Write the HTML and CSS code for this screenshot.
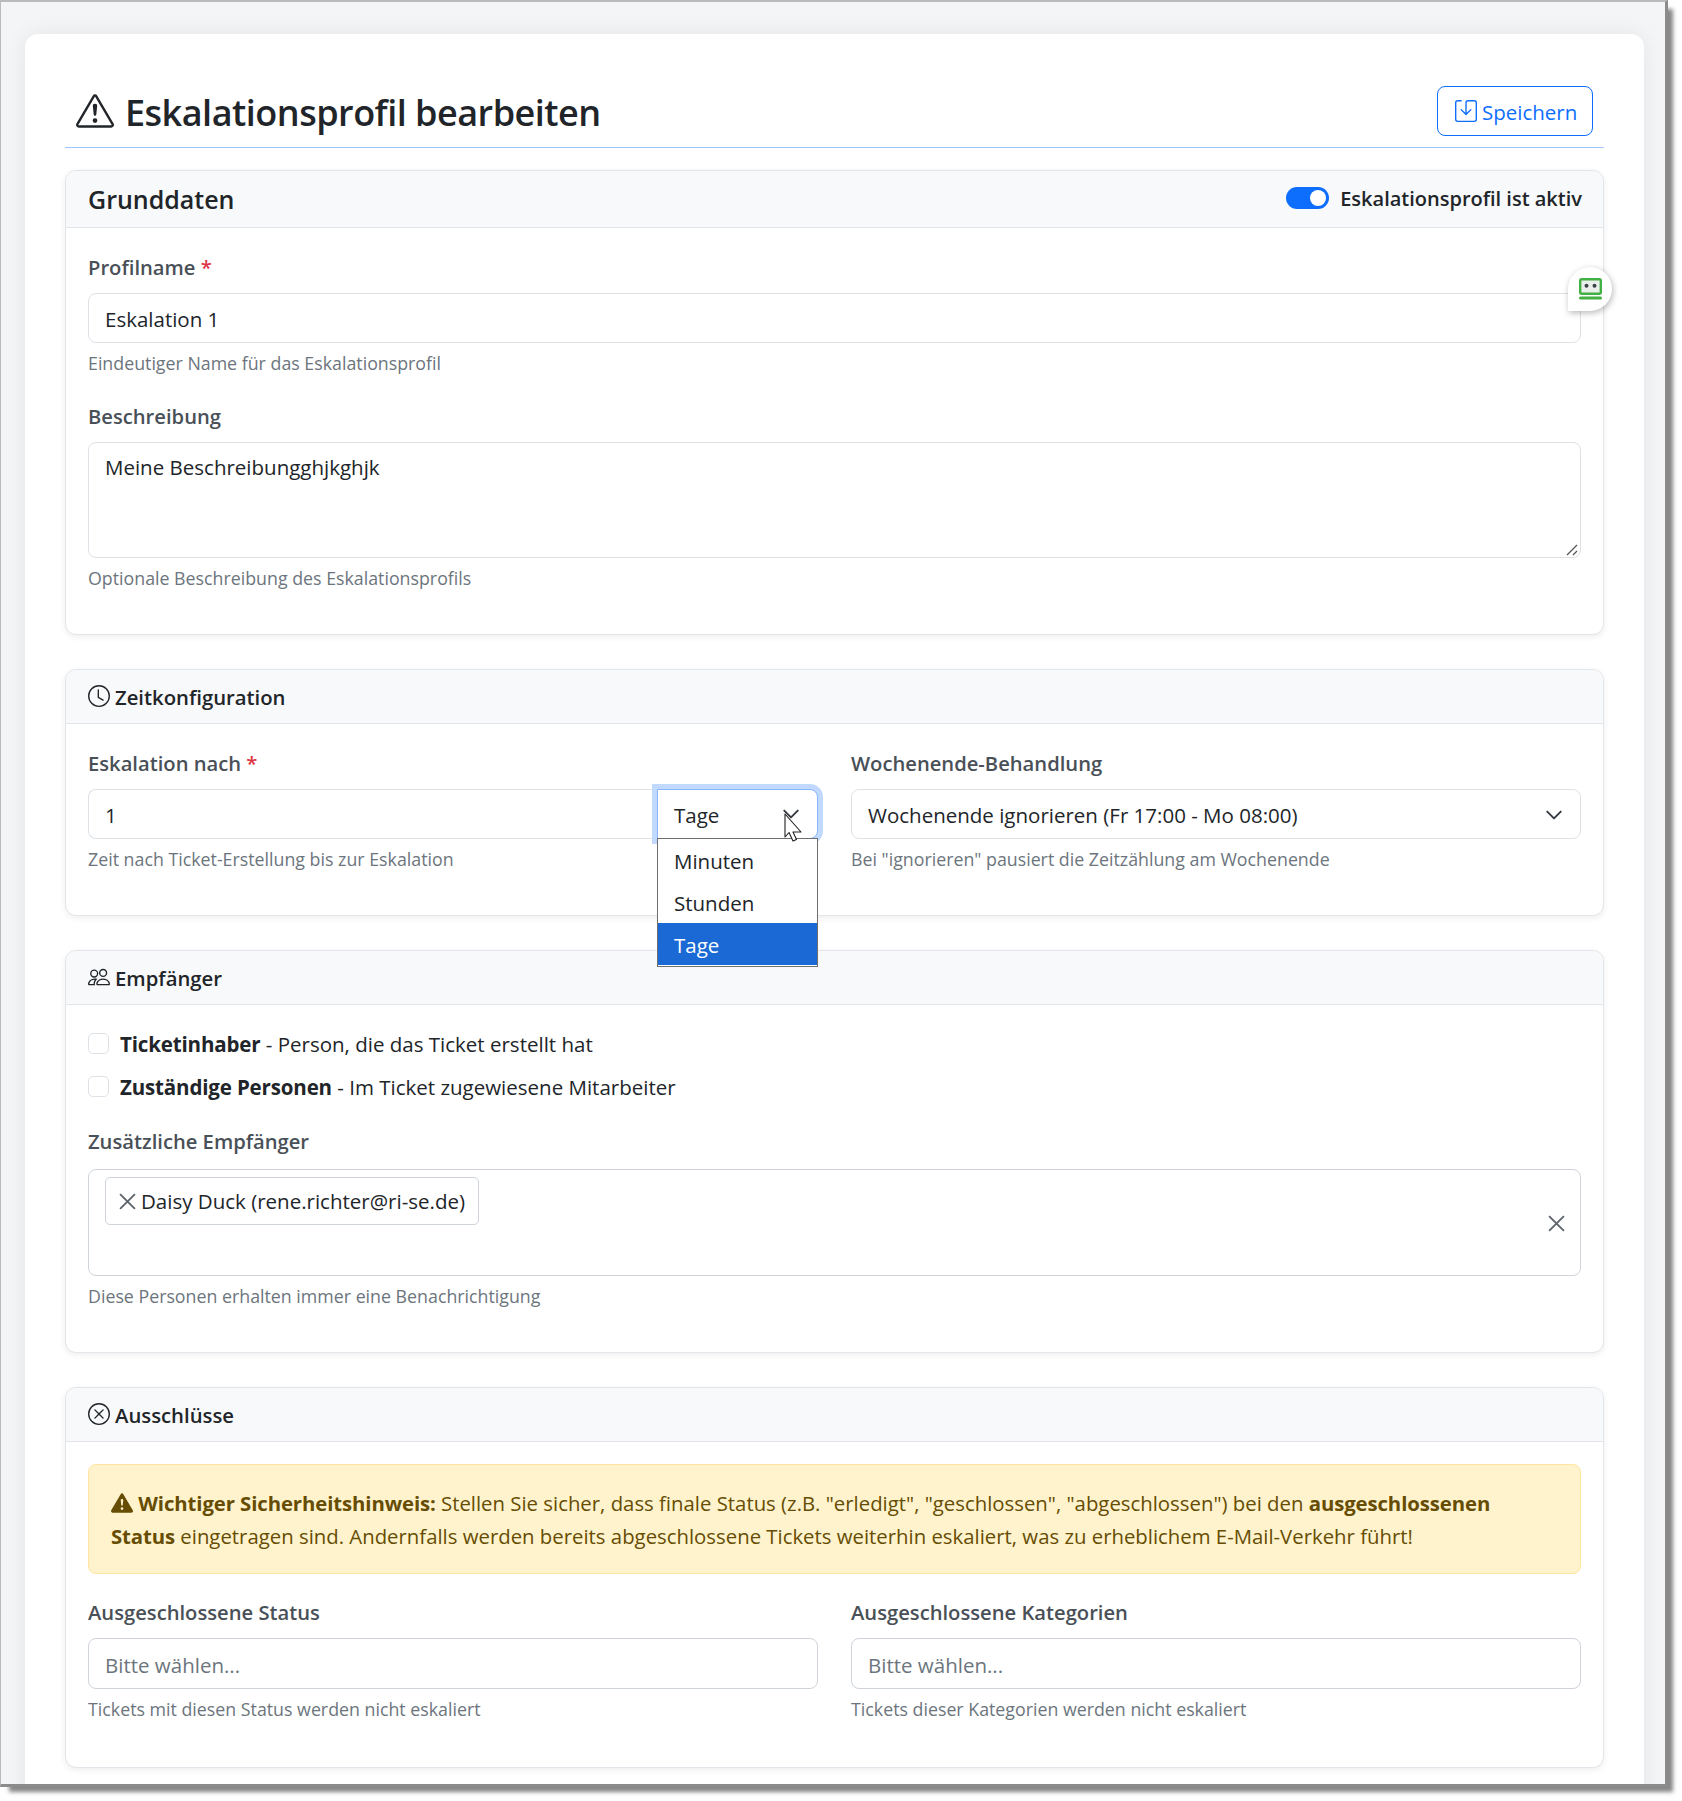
FILE: index.html
```html
<!DOCTYPE html>
<html lang="de">
<head>
<meta charset="utf-8">
<title>Eskalationsprofil bearbeiten</title>
<link rel="stylesheet" href="styles.css">
</head>
<body>
<div class="window">
  <main class="page-card">
    <header class="title-row">
      <h1 class="title">
        <svg class="title-icon" viewBox="0 0 16 16" fill="currentColor"><path d="M7.938 2.016A.13.13 0 0 1 8.002 2a.13.13 0 0 1 .063.016.146.146 0 0 1 .054.057l6.857 11.667c.036.06.035.124.002.183a.163.163 0 0 1-.054.06.116.116 0 0 1-.066.017H1.146a.115.115 0 0 1-.066-.017.163.163 0 0 1-.054-.06.176.176 0 0 1 .002-.183L7.884 2.073a.147.147 0 0 1 .054-.057zm1.044-.45a1.13 1.13 0 0 0-1.96 0L.165 13.233c-.457.778.091 1.767.98 1.767h13.713c.889 0 1.438-.99.98-1.767L8.982 1.566z"/><path d="M7.002 12a1 1 0 1 1 2 0 1 1 0 0 1-2 0zM7.1 5.995a.905.905 0 1 1 1.8 0l-.35 3.507a.552.552 0 0 1-1.1 0L7.1 5.995z"/></svg>
        <span class="title-text">Eskalationsprofil bearbeiten</span>
      </h1>
      <button class="save-btn" type="button">
        <svg class="save-icon" viewBox="0 0 16 16" fill="currentColor"><path d="M2 1a1 1 0 0 0-1 1v12a1 1 0 0 0 1 1h12a1 1 0 0 0 1-1V2a1 1 0 0 0-1-1H9.5a1 1 0 0 0-1 1v7.293l2.646-2.647a.5.5 0 0 1 .708.708l-3.5 3.5a.5.5 0 0 1-.708 0l-3.5-3.5a.5.5 0 1 1 .708-.708L7.5 9.293V2a2 2 0 0 1 2-2H14a2 2 0 0 1 2 2v12a2 2 0 0 1-2 2H2a2 2 0 0 1-2-2V2a2 2 0 0 1 2-2h2.5a.5.5 0 0 1 0 1H2z"/></svg>
        <span class="save-text">Speichern</span>
      </button>
    </header>

    <section class="panel">
      <div class="panel-head panel-head-main">
        <h2 class="head-main">Grunddaten</h2>
        <div class="toggle-wrap">
          <span class="toggle"><span class="knob"></span></span>
          <span class="toggle-label">Eskalationsprofil ist aktiv</span>
        </div>
      </div>
      <div class="panel-body">
        <div class="field field-name">
          <label class="lbl">Profilname <span class="req">*</span></label>
          <input class="ctl" type="text" value="Eskalation 1">
          <div class="hint">Eindeutiger Name für das Eskalationsprofil</div>
          <div class="robot">
            <svg viewBox="0 0 23 22" width="23" height="22"><rect x="1.2" y="1.2" width="20.600" height="14.600" rx="1.500" fill="#e9efe9" stroke="#43b043" stroke-width="2.400"/><circle cx="7.500" cy="7.800" r="2" fill="#3c4248"/><circle cx="15.500" cy="7.800" r="2" fill="#3c4248"/><rect x="0" y="18.500" width="23" height="3" rx="1.500" fill="#43b043"/></svg>
          </div>
        </div>
        <div class="field">
          <label class="lbl">Beschreibung</label>
          <div class="area-wrap">
            <textarea class="ctl area">Meine Beschreibungghjkghjk</textarea>
            <svg class="grip" viewBox="0 0 12 12" width="12" height="12"><path d="M1 11L11 1M7 11l4-4" stroke="#555" stroke-width="1.300" fill="none"/></svg>
          </div>
          <div class="hint">Optionale Beschreibung des Eskalationsprofils</div>
        </div>
      </div>
    </section>

    <section class="panel">
      <div class="panel-head">
        <svg class="head-icon" viewBox="0 0 16 16" fill="currentColor"><path d="M8 3.5a.5.5 0 0 0-1 0V9a.5.5 0 0 0 .252.434l3.5 2a.5.5 0 0 0 .496-.868L8 8.71V3.5z"/><path d="M8 16A8 8 0 1 0 8 0a8 8 0 0 0 0 16zm7-8A7 7 0 1 1 1 8a7 7 0 0 1 14 0z"/></svg>
        <h2 class="head-sub">Zeitkonfiguration</h2>
      </div>
      <div class="panel-body two-col">
        <div class="field">
          <label class="lbl">Eskalation nach <span class="req">*</span></label>
          <div class="input-group">
            <input class="ctl ctl-num" type="text" value="1">
            <div class="unit-select">
              <span class="unit-text">Tage</span>
              <svg class="chev" viewBox="0 0 16 16"><path d="M2 5l6 6 6-6" fill="none" stroke="#343a40" stroke-width="1.7" stroke-linecap="round" stroke-linejoin="round"/></svg>
              <ul class="options">
                <li>Minuten</li>
                <li>Stunden</li>
                <li class="selected">Tage</li>
              </ul>
              <svg class="cursor" viewBox="0 0 18 29" width="18" height="29"><path d="M1 1V24L5 19.500L9 28L12.500 26.500L9 19H17Z" fill="#fff" stroke="#222" stroke-width="1.100" stroke-linejoin="round"/></svg>
            </div>
          </div>
          <div class="hint">Zeit nach Ticket-Erstellung bis zur Eskalation</div>
        </div>
        <div class="field">
          <label class="lbl">Wochenende-Behandlung</label>
          <div class="ctl fake-select">
            <span>Wochenende ignorieren (Fr 17:00 - Mo 08:00)</span>
            <svg class="chev" viewBox="0 0 16 16"><path d="M2 5l6 6 6-6" fill="none" stroke="#343a40" stroke-width="1.7" stroke-linecap="round" stroke-linejoin="round"/></svg>
          </div>
          <div class="hint">Bei "ignorieren" pausiert die Zeitzählung am Wochenende</div>
        </div>
      </div>
    </section>

    <section class="panel">
      <div class="panel-head">
        <svg class="head-icon" viewBox="0 0 16 16" fill="currentColor"><path d="M15 14s1 0 1-1-1-4-5-4-5 3-5 4 1 1 1 1h8Zm-7.978-1A.261.261 0 0 1 7 12.996c.001-.264.167-1.030.760-1.720C8.312 10.629 9.282 10 11 10c1.717 0 2.687.630 3.240 1.276.593.690.758 1.457.760 1.720l-.008.002a.274.274 0 0 1-.014.002H7.022ZM11 7a2 2 0 1 0 0-4 2 2 0 0 0 0 4Zm3-2a3 3 0 1 1-6 0 3 3 0 0 1 6 0ZM6.936 9.280a5.880 5.880 0 0 0-1.230-.247A7.350 7.350 0 0 0 5 9c-4 0-5 3-5 4 0 .667.333 1 1 1h4.216A2.238 2.238 0 0 1 5 13c0-1.010.377-2.042 1.090-2.904.243-.294.526-.569.846-.816ZM4.920 10A5.493 5.493 0 0 0 4 13H1c0-.260.164-1.030.760-1.724.545-.636 1.492-1.256 3.160-1.275ZM1.500 5.500a3 3 0 1 1 6 0 3 3 0 0 1-6 0Zm3-2a2 2 0 1 0 0 4 2 2 0 0 0 0-4Z"/></svg>
        <h2 class="head-sub">Empfänger</h2>
      </div>
      <div class="panel-body">
        <div class="check-row"><span class="check"></span><span><b>Ticketinhaber</b> - Person, die das Ticket erstellt hat</span></div>
        <div class="check-row"><span class="check"></span><span><b>Zuständige Personen</b> - Im Ticket zugewiesene Mitarbeiter</span></div>
        <div class="field field-extra">
          <label class="lbl">Zusätzliche Empfänger</label>
          <div class="multi">
            <span class="chip">
              <svg class="chip-x" viewBox="0 0 16 16"><path d="M1 1l14 14M15 1L1 15" stroke="#5c636a" stroke-width="1.700" fill="none"/></svg>
              <span>Daisy Duck (rene.richter@ri-se.de)</span>
            </span>
            <svg class="clear-x" viewBox="0 0 16 16"><path d="M1 1l14 14M15 1L1 15" stroke="#5c636a" stroke-width="1.700" fill="none"/></svg>
          </div>
          <div class="hint">Diese Personen erhalten immer eine Benachrichtigung</div>
        </div>
      </div>
    </section>

    <section class="panel">
      <div class="panel-head">
        <svg class="head-icon" viewBox="0 0 16 16" fill="currentColor"><path d="M8 15A7 7 0 1 1 8 1a7 7 0 0 1 0 14zm0 1A8 8 0 1 0 8 0a8 8 0 0 0 0 16z"/><path d="M4.646 4.646a.5.5 0 0 1 .708 0L8 7.293l2.646-2.647a.5.5 0 0 1 .708.708L8.707 8l2.647 2.646a.5.5 0 0 1-.708.708L8 8.707l-2.646 2.647a.5.5 0 0 1-.708-.708L7.293 8 4.646 5.354a.5.5 0 0 1 0-.708z"/></svg>
        <h2 class="head-sub">Ausschlüsse</h2>
      </div>
      <div class="panel-body body-alert">
        <div class="alert">
          <svg class="alert-icon" viewBox="0 0 16 16" fill="currentColor"><path d="M8.982 1.566a1.130 1.130 0 0 0-1.960 0L.165 13.233c-.457.778.091 1.767.980 1.767h13.713c.889 0 1.438-.990.980-1.767L8.982 1.566zM8 5c.535 0 .954.462.900.995l-.350 3.507a.552.552 0 0 1-1.100 0L7.100 5.995A.905.905 0 0 1 8 5zm.002 6a1 1 0 1 1 0 2 1 1 0 0 1 0-2z"/></svg>
          <b>Wichtiger Sicherheitshinweis:</b> Stellen Sie sicher, dass finale Status (z.B. "erledigt", "geschlossen", "abgeschlossen") bei den <b>ausgeschlossenen Status</b> eingetragen sind. Andernfalls werden bereits abgeschlossene Tickets weiterhin eskaliert, was zu erheblichem E-Mail-Verkehr führt!
        </div>
        <div class="two-col">
          <div class="field">
            <label class="lbl">Ausgeschlossene Status</label>
            <input class="ctl ctl-tall" type="text" placeholder="Bitte wählen...">
            <div class="hint">Tickets mit diesen Status werden nicht eskaliert</div>
          </div>
          <div class="field">
            <label class="lbl">Ausgeschlossene Kategorien</label>
            <input class="ctl ctl-tall" type="text" placeholder="Bitte wählen...">
            <div class="hint">Tickets dieser Kategorien werden nicht eskaliert</div>
          </div>
        </div>
      </div>
    </section>
  </main>
</div>
</body>
</html>
```
FILE: styles.css
```css
* { box-sizing: border-box; }
html, body { margin: 0; padding: 0; background: #fff; }
body {
  font-family: "Open Sans", "Noto Sans", sans-serif;
  font-size: 20.5px;
  color: #212529;
  height: 1801px;
  overflow: hidden;
}
.window {
  width: 1668px;
  height: 1787px;
  background: #f4f5f7;
  border-style: solid;
  border-color: #b9babc #8b8b8b #8b8b8b #b9babc;
  border-width: 2px 3px 3px 1px;
  box-shadow: 7px 7px 4px -2px rgba(70, 70, 70, .65);
  padding: 32px 21px 0 24px;
  overflow: hidden;
}
.page-card {
  background: #fff;
  width: 1619px;
  height: 1800px;
  border-radius: 13px 13px 0 0;
  box-shadow: 0 0 22px rgba(0, 0, 0, .07);
  padding: 52px 40px 0;
}
.title-row {
  display: flex;
  justify-content: space-between;
  align-items: center;
  height: 62px;
  padding: 0 11px 11px;
  border-bottom: 1px solid #9ec5fe;
  margin-bottom: 22px;
}
.title {
  display: flex;
  align-items: center;
  gap: 11px;
  margin: 0;
  font-size: 36px;
  font-weight: 600;
  letter-spacing: -.5px;
  line-height: 50px;
}
.title-text { padding-top: 4px; }
.title-icon { width: 38px; height: 38px; }
.save-btn {
  display: flex;
  align-items: center;
  gap: 5px;
  width: 156px;
  height: 50px;
  padding: 0 0 0 17px;
  background: #fff;
  border: 1px solid #0d6efd;
  border-radius: 8px;
  color: #0d6efd;
  font: inherit;
}
.save-text { padding-top: 2px; }
.save-icon { width: 22px; height: 22px; }

.panel {
  width: 1539px;
  background: #fff;
  border: 1px solid #e2e5e9;
  border-radius: 11px;
  box-shadow: 0 2px 6px rgba(0, 0, 0, .07);
  margin-bottom: 34px;
}
.panel-head {
  display: flex;
  align-items: center;
  gap: 5px;
  height: 54px;
  padding: 0 22px;
  background: #f8f9fa;
  border-bottom: 1px solid #e2e5e9;
  border-radius: 11px 11px 0 0;
}
.panel-head-main { justify-content: space-between; height: 57px; padding-right: 21px; }
.head-main { margin: 0; font-size: 25px; font-weight: 600; }
.head-sub { margin: 0; font-size: 20.300px; font-weight: 600; }
.head-icon { width: 22px; height: 22px; margin-top: -2px; }
.toggle-wrap { display: flex; align-items: center; gap: 11px; margin-top: -3px; }
.toggle {
  display: flex;
  justify-content: flex-end;
  align-items: center;
  width: 43px;
  height: 22px;
  padding-right: 3px;
  background: #0d6efd;
  border-radius: 11px;
}
.knob { width: 16px; height: 16px; background: #fff; border-radius: 50%; }
.toggle-label { padding-top: 2px; font-size: 20px; font-weight: 600; }

.panel-body { padding: 24px 22px 18px; }
.body-alert { padding: 22px 22px 20px; }
.two-col { display: grid; grid-template-columns: 730px 730px; column-gap: 33px; }
.field { position: relative; padding-bottom: 24px; }
.lbl {
  display: block;
  height: 31px;
  line-height: 31px;
  margin-bottom: 10px;
  font-size: 20.200px;
  font-weight: 600;
  color: #495057;
}
.req { color: #dc3545; }
.ctl {
  display: block;
  width: 100%;
  height: 50px;
  padding: 1px 16px 0;
  background: #fff;
  border: 1px solid #dee2e6;
  border-radius: 8px;
  color: #212529;
  font: inherit;
  outline: none;
}
.ctl::placeholder { color: #6c757d; opacity: 1; }
.ctl-tall { height: 51px; padding-top: 2px; border-color: #ced4da; }
.area-wrap { position: relative; }
.area {
  height: 116px;
  padding-top: 10px;
  line-height: 29px;
  resize: none;
}
.grip { position: absolute; right: 3px; bottom: 2px; }
.hint {
  margin-top: 7px;
  height: 27px;
  line-height: 27px;
  font-size: 17.800px;
  color: #6c757d;
}
.input-group { display: flex; }
.ctl-num { flex: 1; border-radius: 8px 0 0 8px; border-right: 0; }
.unit-select {
  position: relative;
  display: flex;
  align-items: center;
  justify-content: space-between;
  width: 161px;
  height: 50px;
  padding: 0 17px 0 16px;
  background: #fff;
  border: 1px solid #86b7fe;
  border-radius: 0 8px 8px 0;
  box-shadow: 0 0 0 5px #c2d9fe;
}
.unit-text { padding-top: 2px; }
.chev { width: 18px; height: 18px; }
.options {
  position: absolute;
  left: -1px;
  top: 48px;
  width: 161px;
  margin: 0;
  padding: 0 0 1px;
  list-style: none;
  background: #fff;
  border: 1px solid #6e6e6e;
  z-index: 3;
}
.options li { height: 42px; padding: 2px 0 0 16px; line-height: 40px; }
.options .selected { background: #1a69d4; color: #fff; }
.cursor { position: absolute; left: 126px; top: 23px; z-index: 4; }
.fake-select {
  display: flex;
  align-items: center;
  justify-content: space-between;
  padding-right: 17px;
}
.check-row {
  display: flex;
  align-items: center;
  gap: 11px;
  height: 31px;
  margin-bottom: 12px;
}
.check-row:first-child { margin-top: -1px; }
.check {
  width: 21px;
  height: 21px;
  background: #fff;
  border: 1px solid #dee2e6;
  border-radius: 5px;
}
.check-row b { font-weight: 700; letter-spacing: -.15px; }
.field-extra { margin-top: 24px; }
.field-extra .lbl { margin-bottom: 12px; }
.multi {
  position: relative;
  height: 107px;
  padding: 7px 16px;
  border: 1px solid #ced4da;
  border-radius: 8px;
}
.chip {
  display: inline-flex;
  align-items: center;
  gap: 5px;
  width: 374px;
  height: 48px;
  padding-left: 13px;
  border: 1px solid #ced4da;
  border-radius: 5px;
  white-space: nowrap;
}
.chip-x { width: 17px; height: 17px; }
.clear-x { position: absolute; right: 15px; top: 45px; width: 17px; height: 17px; }
.alert {
  height: 110px;
  padding: 22px 22px 20px;
  margin-bottom: 23px;
  background: #fff3cd;
  border: 1px solid #ffe69c;
  border-radius: 8px;
  color: #664d03;
  font-size: 20.350px;
  line-height: 33px;
}
.alert b { font-weight: 700; letter-spacing: -.1px; }
.alert-icon { width: 22px; height: 22px; vertical-align: -3px; }
.robot {
  position: absolute;
  right: -31px;
  top: 15px;
  display: flex;
  align-items: center;
  justify-content: center;
  width: 44px;
  height: 44px;
  background: #fff;
  border-radius: 22px 22px 22px 0;
  box-shadow: 1px 2px 6px rgba(0, 0, 0, .28);
  z-index: 2;
}
```
